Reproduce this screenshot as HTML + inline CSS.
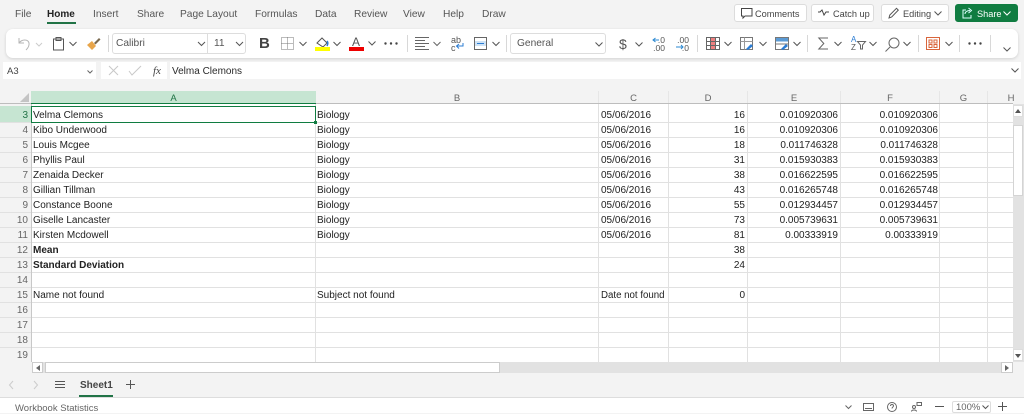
<!DOCTYPE html>
<html style="background:#f3f3f3"><head><meta charset="utf-8"><style>
html,body{margin:0;padding:0}
body{width:1024px;height:413px;overflow:hidden;background:#f3f3f3;position:relative;font-family:"Liberation Sans",sans-serif;color:#333;filter:blur(.3px)}
.abs,.t,.l,.h,.v,.r span,.ch,.rh,.m{position:absolute}
.m{top:8px;font-size:10.2px;line-height:14px;color:#555;white-space:nowrap}
.t{white-space:nowrap;font-size:10.2px;margin-top:1px}
.btn{position:absolute;top:4px;height:18px;background:#fff;border:1px solid #dcdcdc;border-radius:3px;box-sizing:border-box;font-size:9.2px;line-height:19px;color:#444;white-space:nowrap}
.h{height:1px;left:0;width:1013px;background:#e1e1e1}
.v{width:1px;top:104px;height:258px;background:#e1e1e1}
.ch{top:91px;height:12px;line-height:13px;font-size:9.5px;text-align:center;color:#666;border-right:1px solid #e6e6e6;box-sizing:border-box;padding-top:1px}
.rh{left:0;width:28px;text-align:right;font-size:10px;height:15px;line-height:15px;color:#666;margin-top:1px}
.r{position:absolute;left:0;width:1013px;height:15px;font-size:10px;line-height:16px;color:#222;white-space:nowrap;margin-top:1px}
.r .a{left:33px}.r .b{left:317px}.r .c{left:601px}
.r .d{right:268px}.r .e{right:175px}.r .f{right:75px}
svg{position:absolute;overflow:visible}
.sep{position:absolute;top:35px;width:1px;height:17px;background:#d8d8d8}
</style></head><body>

<div class="m" style="left:15px">File</div>
<div class="m" style="left:47px;color:#222;font-weight:bold;font-size:10px">Home</div>
<div class="abs" style="left:47px;top:22px;width:29px;height:2px;background:#217346"></div>
<div class="m" style="left:93px">Insert</div>
<div class="m" style="left:137px">Share</div>
<div class="m" style="left:180px">Page Layout</div>
<div class="m" style="left:255px">Formulas</div>
<div class="m" style="left:315px">Data</div>
<div class="m" style="left:354px">Review</div>
<div class="m" style="left:403px">View</div>
<div class="m" style="left:443px">Help</div>
<div class="m" style="left:482px">Draw</div>

<div class="btn" style="left:734px;width:73px;padding-left:20px">Comments</div>
<svg style="left:741px;top:8px" width="12" height="11" fill="none" stroke="#444"><path d="M.5.5h10.500v7.500H4L2 10V8H.5z"/></svg>
<div class="btn" style="left:811px;width:63px;padding-left:21px">Catch up</div>
<svg style="left:818px;top:9px" width="12" height="8" fill="none" stroke="#444"><path d="M0 3h2l2-2 2 5 2-3h3"/></svg>
<div class="btn" style="left:881px;width:68px;padding-left:21px">Editing</div>
<svg style="left:888px;top:7px" width="12" height="12" fill="none" stroke="#555"><path d="M1 11l.8-3L8.500 1.300l1.800 1.800L3.700 10z"/></svg>
<svg style="left:934px;top:11px" width="8" height="5" fill="none" stroke="#555"><path d="M.5.500L4 4 7.500.500"/></svg>
<div class="btn" style="left:955px;width:63px;padding-left:21px;background:#107c41;border-color:#107c41;color:#fff">Share</div>
<svg style="left:962px;top:7px" width="12" height="12" fill="none" stroke="#dff"><path d="M4 3H1v8h8V8M3 7c0-2 2-3.500 5-3.500M6.500 1L9.500 3.500 6.500 6"/></svg>
<svg style="left:1003px;top:11px" width="8" height="5" fill="none" stroke="#fff"><path d="M.5.500L4 4 7.500.500"/></svg>

<div class="abs" style="left:6px;top:29px;width:1012px;height:29px;background:#fff;border-radius:7px;box-shadow:0 1px 3px rgba(0,0,0,.14)"></div>
<svg style="left:17px;top:37px" width="26" height="14" fill="none" stroke="#b5b5b5"><path d="M2 1v5h5M2 6c3-4 9-4 10 0 .6 3-1 5-3 7"/><path d="M19 6l3 3 3-3" stroke="#ccc"/></svg>
<svg style="left:53px;top:37px" width="24" height="14" fill="none" stroke="#555"><path d="M.5 2h10v11H.5zM3 .5h5v3H3z"/><path d="M16.500 5l3.500 3.500L23.500 5"/></svg>
<svg style="left:87px;top:38px" width="14" height="12"><path d="M0 7l5-4 4 5-4 4z" fill="#e8a54a"/><path d="M7 5l5-5 1.500 1.500-5 5z" fill="#7a6a50"/></svg>
<div class="sep" style="left:108px"></div>

<div class="abs" style="left:112px;top:33px;width:134px;height:21px;border:1px solid #ddd;border-radius:3px;box-sizing:border-box;background:#fff"></div>
<div class="abs" style="left:207px;top:33px;width:1px;height:21px;background:#ddd"></div>
<div class="t" style="left:116px;top:37px;color:#555">Calibri</div>
<div class="t" style="left:214px;top:37px;color:#555">11</div>
<svg style="left:198px;top:42px" width="46" height="5" fill="none" stroke="#555"><path d="M0 0l3.500 3.500L7 0M38 0l3.500 3.500L45 0"/></svg>
<div class="t" style="left:259px;top:34px;font-size:15px;font-weight:bold;color:#444">B</div>
<svg style="left:281px;top:37px" width="26" height="13" fill="none" stroke="#777"><path d="M.5.500h12v12H.5zM6.500.500v12M.5 6.500h12" stroke-dasharray="1 1"/><path d="M18.500 5l3.500 3.500L25.500 5" stroke="#555"/></svg>
<svg style="left:315px;top:36px" width="28" height="16"><path d="M2 7l5-5 5 5-4 4z" fill="none" stroke="#555"/><path d="M12 5c1 1 1 3 0 5" fill="none" stroke="#2b7cd3" stroke-width="1.500"/><rect y="11" width="15" height="4" fill="#ff0"/><path d="M18.500 6l3.500 3.500L25.500 6" fill="none" stroke="#555"/></svg>
<div class="t" style="left:352px;top:34px;font-size:12px;color:#555">A</div>
<svg style="left:349px;top:47px" width="15" height="4"><rect width="15" height="4" fill="#e00"/></svg>
<svg style="left:368px;top:41px" width="8" height="5" fill="none" stroke="#555"><path d="M.5.500L4 4 7.500.500"/></svg>
<svg style="left:384px;top:42px" width="14" height="3" fill="#444"><circle cx="1.500" cy="1.500" r="1.200"/><circle cx="7" cy="1.500" r="1.200"/><circle cx="12.500" cy="1.500" r="1.200"/></svg>
<div class="sep" style="left:407px"></div>
<svg style="left:415px;top:37px" width="26" height="14" fill="none" stroke="#666"><path d="M0 .5h14M0 3.500h10M0 6.500h14M0 9.500h10M0 12.500h14"/><path d="M18.500 5l3.500 3.500L25.500 5"/></svg>
<div class="t" style="left:451px;top:35px;font-size:9px;line-height:8px;color:#555">ab<br>c</div>
<svg style="left:455px;top:43px" width="10" height="8" fill="none" stroke="#2b7cd3"><path d="M8 0v3H2M4 1L1.500 3 4 5.500"/></svg>
<svg style="left:474px;top:37px" width="26" height="14" fill="none"><rect x=".5" y=".5" width="12" height="12" stroke="#666"/><rect x="1" y="4" width="11" height="5" fill="#cfe3f5"/><path d="M3 6.500h7" stroke="#2b7cd3"/><path d="M18.500 5l3.500 3.500L25.500 5" stroke="#555"/></svg>
<div class="sep" style="left:506px"></div>

<div class="abs" style="left:510px;top:33px;width:96px;height:21px;border:1px solid #ddd;border-radius:3px;box-sizing:border-box;background:#fff"></div>
<div class="t" style="left:517px;top:37px;color:#555">General</div>
<svg style="left:595px;top:42px" width="8" height="5" fill="none" stroke="#555"><path d="M.5.500L4 4 7.500.500"/></svg>
<div class="t" style="left:619px;top:35px;font-size:14px;color:#555">$</div>
<svg style="left:635px;top:42px" width="8" height="5" fill="none" stroke="#555"><path d="M.5.500L4 4 7.500.500"/></svg>
<div class="t" style="left:650px;top:35px;font-size:8.500px;line-height:8px;color:#555;text-align:right;width:15px">.0<br>.00</div>
<div class="t" style="left:673px;top:35px;font-size:8.500px;line-height:8px;color:#555;text-align:right;width:16px">.00<br>.0</div>
<svg style="left:652px;top:37px" width="38" height="13" fill="none" stroke="#2b8ad3"><path d="M7 3H1M3.500 1L1 3l2.500 2M24 10h7M29 8l2 2-2 2" transform="translate(0 0)"/></svg>
<div class="sep" style="left:697px"></div>
<svg style="left:706px;top:37px" width="28" height="14" fill="none"><rect x="4" y="1" width="5" height="12" fill="#f08080"/><path d="M.5.500h13v12H.5zM4.500.500v12M9.500.500v12M.5 4.500h13M.5 8.500h13" stroke="#666"/><path d="M18.500 5l3.500 3.500L25.500 5" stroke="#555"/></svg>
<svg style="left:740px;top:37px" width="28" height="15" fill="none"><path d="M.5.500h12v12H.5z" stroke="#777"/><path d="M.5 4.500h12M4.500.500v12" stroke="#999"/><path d="M6 12l5-5 2 2-5 4z" fill="#2b7cd3"/><path d="M19.500 5l3.500 3.500L26.500 5" stroke="#555"/></svg>
<svg style="left:775px;top:37px" width="28" height="15" fill="none"><rect x=".5" y=".5" width="13" height="4" fill="#5b9bd5"/><path d="M.5.500h13v12H.5zM.5 7h13" stroke="#777"/><path d="M6 12l5-5 2 2-5 4z" fill="#2b7cd3"/><path d="M18.500 5l3.500 3.500L25.500 5" stroke="#555"/></svg>
<div class="sep" style="left:807px"></div>
<svg style="left:818px;top:37px" width="28" height="14" fill="none" stroke="#666"><path d="M10 1H.8l5 5.500-5 5.500H10"/><path d="M16.500 5l3.500 3.500L23.500 5" stroke="#555"/></svg>
<div class="t" style="left:851px;top:35px;font-size:8px;line-height:8px;color:#2b7cd3">A<br><span style="color:#555">Z</span></div>
<svg style="left:857px;top:41px" width="20" height="9" fill="none" stroke="#666"><path d="M.5.500h8L5.500 4v4H3.500V4z"/><path d="M12.500 1l3.500 3.500L19.500 1" stroke="#555"/></svg>
<svg style="left:885px;top:37px" width="26" height="15" fill="none" stroke="#666"><circle cx="9" cy="6" r="5"/><path d="M5 10L.5 14.500"/><path d="M18.500 5l3.500 3.500L25.500 5" stroke="#555"/></svg>
<div class="sep" style="left:918px"></div>
<svg style="left:926px;top:37px" width="27" height="14" fill="none"><rect x=".5" y=".5" width="13" height="12" stroke="#d9653b"/><path d="M3 3h3v3H3zM8 3h3v3H8zM3 7.500h3v3H3zM8 7.500h3v3H8z" stroke="#d9653b"/><path d="M19.500 5l3.500 3.500L26.500 5" stroke="#555"/></svg>
<div class="sep" style="left:959px"></div>
<svg style="left:968px;top:42px" width="14" height="3" fill="#444"><circle cx="1.500" cy="1.500" r="1.200"/><circle cx="7" cy="1.500" r="1.200"/><circle cx="12.500" cy="1.500" r="1.200"/></svg>
<div class="sep" style="left:990px"></div>
<svg style="left:1003px;top:47px" width="8" height="5" fill="none" stroke="#555"><path d="M.5.500L4 4 7.500.500"/></svg>

<div class="abs" style="left:3px;top:62px;width:93px;height:17px;background:#fff"></div>
<div class="t" style="left:7px;top:65px;font-size:9.500px;color:#444">A3</div>
<svg style="left:87px;top:70px" width="6" height="4" fill="none" stroke="#666"><path d="M.5.500L3 3 5.500.500"/></svg>
<div class="abs" style="left:101px;top:62px;width:66px;height:17px;background:#fff"></div>
<svg style="left:108px;top:65px" width="36" height="11" fill="none" stroke="#c8c8c8"><path d="M1 1l9 9M10 1l-9 9M21 6l3 4 9-9"/></svg>
<div class="t" style="left:153px;top:64px;font-family:'Liberation Serif',serif;font-style:italic;font-size:11px;color:#444">fx</div>
<div class="abs" style="left:170px;top:62px;width:851px;height:17px;background:#fff"></div>
<div class="t" style="left:172px;top:65px;font-size:10px;color:#2b2b2b">Velma Clemons</div>
<svg style="left:1011px;top:68px" width="8" height="5" fill="none" stroke="#555"><path d="M.5.500L4 4 7.500.500"/></svg>

<div class="abs" style="left:31px;top:104px;width:982px;height:258px;background:#fff"></div>
<div class="abs" style="left:0;top:103px;width:1013px;height:1px;background:#bdbdbd"></div>
<div class="abs" style="left:31px;top:91px;width:285px;height:12px;background:#c6e5d2"></div>
<div class="abs" style="left:31px;top:103px;width:285px;height:1px;background:#107c41"></div>
<div class="abs" style="left:0;top:106px;width:31px;height:16px;background:#c6e5d2"></div>
<svg style="left:20px;top:93px" width="9" height="9"><path d="M9 0v9H0z" fill="#c4c4c4"/></svg>
<div class="ch" style="left:31px;width:285px;color:#217346;border:0">A</div>
<div class="ch" style="left:316px;width:283px">B</div>
<div class="ch" style="left:599px;width:70px">C</div>
<div class="ch" style="left:669px;width:79px">D</div>
<div class="ch" style="left:748px;width:93px">E</div>
<div class="ch" style="left:841px;width:99px">F</div>
<div class="ch" style="left:940px;width:48px">G</div>
<div class="ch" style="left:1006px;width:10px;border:0">H</div>

<div class="rh" style="top:107px;color:#217346">3</div>
<div class="rh" style="top:122px">4</div>
<div class="rh" style="top:137px">5</div>
<div class="rh" style="top:152px">6</div>
<div class="rh" style="top:167px">7</div>
<div class="rh" style="top:182px">8</div>
<div class="rh" style="top:197px">9</div>
<div class="rh" style="top:212px">10</div>
<div class="rh" style="top:227px">11</div>
<div class="rh" style="top:242px">12</div>
<div class="rh" style="top:257px">13</div>
<div class="rh" style="top:272px">14</div>
<div class="rh" style="top:287px">15</div>
<div class="rh" style="top:302px">16</div>
<div class="rh" style="top:317px">17</div>
<div class="rh" style="top:332px">18</div>
<div class="rh" style="top:347px">19</div>

<div class="h" style="top:122px"></div><div class="h" style="top:137px"></div><div class="h" style="top:152px"></div><div class="h" style="top:167px"></div><div class="h" style="top:182px"></div><div class="h" style="top:197px"></div><div class="h" style="top:212px"></div><div class="h" style="top:227px"></div><div class="h" style="top:242px"></div><div class="h" style="top:257px"></div><div class="h" style="top:272px"></div><div class="h" style="top:287px"></div><div class="h" style="top:302px"></div><div class="h" style="top:317px"></div><div class="h" style="top:332px"></div><div class="h" style="top:347px"></div>
<div class="v" style="left:31px;background:#c8c8c8"></div><div class="v" style="left:315px"></div><div class="v" style="left:598px"></div><div class="v" style="left:668px"></div><div class="v" style="left:747px"></div><div class="v" style="left:840px"></div><div class="v" style="left:939px"></div><div class="v" style="left:987px"></div>

<div class="abs" style="left:317px;top:104px;width:60px;height:2px;overflow:hidden"><div class="abs" style="left:0;top:-12px;font-size:10px;line-height:16px;color:#222">Biology</div></div>

<div class="r" style="top:107px"><span class="a">Velma Clemons</span><span class="b">Biology</span><span class="c">05/06/2016</span><span class="d">16</span><span class="e">0.010920306</span><span class="f">0.010920306</span></div>
<div class="r" style="top:122px"><span class="a">Kibo Underwood</span><span class="b">Biology</span><span class="c">05/06/2016</span><span class="d">16</span><span class="e">0.010920306</span><span class="f">0.010920306</span></div>
<div class="r" style="top:137px"><span class="a">Louis Mcgee</span><span class="b">Biology</span><span class="c">05/06/2016</span><span class="d">18</span><span class="e">0.011746328</span><span class="f">0.011746328</span></div>
<div class="r" style="top:152px"><span class="a">Phyllis Paul</span><span class="b">Biology</span><span class="c">05/06/2016</span><span class="d">31</span><span class="e">0.015930383</span><span class="f">0.015930383</span></div>
<div class="r" style="top:167px"><span class="a">Zenaida Decker</span><span class="b">Biology</span><span class="c">05/06/2016</span><span class="d">38</span><span class="e">0.016622595</span><span class="f">0.016622595</span></div>
<div class="r" style="top:182px"><span class="a">Gillian Tillman</span><span class="b">Biology</span><span class="c">05/06/2016</span><span class="d">43</span><span class="e">0.016265748</span><span class="f">0.016265748</span></div>
<div class="r" style="top:197px"><span class="a">Constance Boone</span><span class="b">Biology</span><span class="c">05/06/2016</span><span class="d">55</span><span class="e">0.012934457</span><span class="f">0.012934457</span></div>
<div class="r" style="top:212px"><span class="a">Giselle Lancaster</span><span class="b">Biology</span><span class="c">05/06/2016</span><span class="d">73</span><span class="e">0.005739631</span><span class="f">0.005739631</span></div>
<div class="r" style="top:227px"><span class="a">Kirsten Mcdowell</span><span class="b">Biology</span><span class="c">05/06/2016</span><span class="d">81</span><span class="e">0.00333919</span><span class="f">0.00333919</span></div>
<div class="r" style="top:242px"><span class="a"><b>Mean</b></span><span class="d">38</span></div>
<div class="r" style="top:257px"><span class="a"><b>Standard Deviation</b></span><span class="d">24</span></div>
<div class="r" style="top:287px"><span class="a">Name not found</span><span class="b">Subject not found</span><span class="c" style="font-size:9.700px">Date not found</span><span class="d">0</span></div>

<div class="abs" style="left:31px;top:106px;width:285px;height:17px;border:1px solid #107c41;box-sizing:border-box"></div>
<div class="abs" style="left:314px;top:121px;width:3px;height:3px;background:#107c41"></div>

<div class="abs" style="left:1013px;top:104px;width:11px;height:258px;background:#e2e2e2"></div>
<div class="abs" style="left:1013px;top:105px;width:10px;height:12px;background:#fff;border:1px solid #ddd;box-sizing:border-box"></div>
<div class="abs" style="left:1013px;top:125px;width:10px;height:71px;background:#fff;border:1px solid #d4d4d4;box-sizing:border-box"></div>
<div class="abs" style="left:1013px;top:349px;width:10px;height:12px;background:#fff;border:1px solid #ddd;box-sizing:border-box"></div>
<svg style="left:1015px;top:109px" width="6" height="4"><path d="M0 4h6L3 0z" fill="#555"/></svg>
<svg style="left:1015px;top:354px" width="6" height="4"><path d="M0 0h6L3 4z" fill="#555"/></svg>

<div class="abs" style="left:0;top:362px;width:1013px;height:11px;background:#f3f3f3"></div>
<div class="abs" style="left:32px;top:362px;width:981px;height:11px;background:#e2e2e2"></div>
<div class="abs" style="left:32px;top:362px;width:11px;height:11px;background:#fff;border:1px solid #ccc;box-sizing:border-box"></div>
<div class="abs" style="left:45px;top:362px;width:455px;height:11px;background:#fff;border:1px solid #ccc;box-sizing:border-box"></div>
<div class="abs" style="left:1001px;top:362px;width:12px;height:11px;background:#fff;border:1px solid #ccc;box-sizing:border-box"></div>
<svg style="left:36px;top:365px" width="4" height="6"><path d="M4 0v6L0 3z" fill="#666"/></svg>
<svg style="left:1005px;top:365px" width="4" height="6"><path d="M0 0v6l4-3z" fill="#666"/></svg>

<svg style="left:9px;top:380px" width="30" height="10" fill="none" stroke="#ccc"><path d="M4 1L.5 5 4 9M25 1l3.500 4L25 9"/></svg>
<svg style="left:55px;top:381px" width="10" height="8" stroke="#555"><path d="M0 .5h10M0 3.500h10M0 6.500h10"/></svg>
<div class="t" style="left:80px;top:379px;font-size:10px;font-weight:bold;color:#444">Sheet1</div>
<div class="abs" style="left:79px;top:395px;width:34px;height:2px;background:#217346"></div>
<svg style="left:126px;top:380px" width="9" height="9" stroke="#555"><path d="M4.500 0v9M0 4.500h9"/></svg>
<div class="abs" style="left:0;top:397px;width:1024px;height:16px;background:#fff;border-top:1px solid #ddd;box-sizing:border-box"></div>
<div class="t" style="left:15px;top:402px;font-size:9.500px;color:#666">Workbook Statistics</div>
<svg style="left:845px;top:405px" width="7" height="4" fill="none" stroke="#666"><path d="M.5.500L3.500 3.500 6.500.500"/></svg>
<svg style="left:863px;top:403px" width="11" height="8" fill="none" stroke="#666"><path d="M.5.500h10v7H.5zM2 5.500h7"/></svg>
<svg style="left:887px;top:402px" width="10" height="10" fill="none" stroke="#666"><circle cx="5" cy="5" r="4.500"/><path d="M3.500 4c0-2 3-2 3 0 0 1-1.500 1-1.500 2.500"/></svg>
<svg style="left:911px;top:402px" width="11" height="10" fill="none" stroke="#666"><circle cx="3" cy="5" r="1.500"/><path d="M.5 9.500c0-2 5-2 5 0M6 .5h4.500v3H6z"/></svg>
<svg style="left:935px;top:406px" width="9" height="1"><rect width="9" height="1" fill="#555"/></svg>
<div class="abs" style="left:952px;top:401px;width:39px;height:12px;border:1px solid #ddd;border-radius:2px;box-sizing:border-box;font-size:9.500px;line-height:11px;color:#666;padding-left:3px;background:#fff">100%</div>
<svg style="left:982px;top:405px" width="7" height="4" fill="none" stroke="#555"><path d="M.5.500L3.500 3.500 6.500.500"/></svg>
<svg style="left:998px;top:402px" width="9" height="9" stroke="#555"><path d="M4.500 0v9M0 4.500h9"/></svg>
</body></html>
